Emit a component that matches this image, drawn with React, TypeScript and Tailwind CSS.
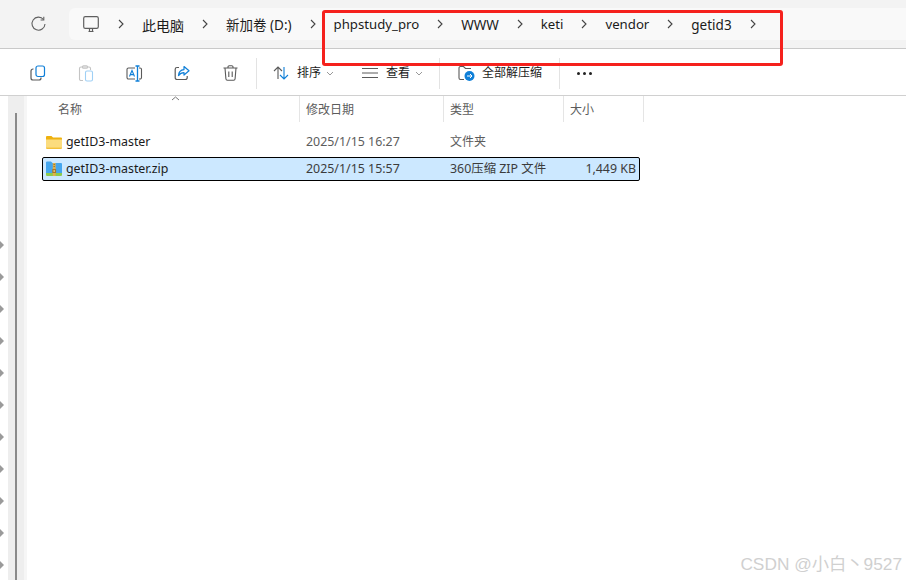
import React from 'react'

const font = '[font-family:"Noto_Sans","Noto_Sans_CJK_SC",sans-serif]'

function Chevron() {
  return (
    <svg width="6" height="10" viewBox="0 0 6 10" fill="none" stroke="#444" strokeWidth="1.1" className="shrink-0">
      <path d="M1 1l4 4-4 4" />
    </svg>
  )
}

function SmallCaret() {
  return (
    <svg width="8" height="5" viewBox="0 0 8 5" fill="none" stroke="#999" strokeWidth="1">
      <path d="M1 1l3 3 3-3" />
    </svg>
  )
}

function Crumbs() {
  const items = [
    { t: '此电脑', c: 'text-[14px]' },
    { t: '新加卷 (D:)', c: 'text-[13.5px]' },
    { t: 'phpstudy_pro', c: 'text-[13.2px]' },
    { t: 'WWW', c: 'text-[13.5px]' },
    { t: 'keti', c: 'text-[13.2px]' },
    { t: 'vendor', c: 'text-[13.2px]' },
    { t: 'getid3', c: 'text-[13.5px]' },
  ]
  return (
    <div className="ml-[23px] flex h-8 flex-1 items-center rounded-l-md bg-[#f9f9f9] pl-[14px]">
      <svg width="16" height="17" viewBox="0 0 16 17" fill="none" stroke="#5f5f5f" strokeWidth="1.2">
        <rect x="0.7" y="0.7" width="14.6" height="11.6" rx="1.6" />
        <path d="M5.5 15.5h5M6.5 12.5v3M9.5 12.5v3" />
      </svg>
      <div className="ml-[19px] flex items-center gap-[18px] text-[#1b1b1b]">
        <Chevron />
        {items.map((item) => (
          <React.Fragment key={item.t}>
            <span className={`whitespace-nowrap pt-[2px] ${item.c}`}>{item.t}</span>
            <Chevron />
          </React.Fragment>
        ))}
      </div>
    </div>
  )
}

function CopyIcon() {
  return (
    <svg width="16" height="16" viewBox="0 0 16 16" fill="none" strokeWidth="1.2">
      <path d="M3.5 4H3a2 2 0 0 0-2 2v7a2 2 0 0 0 2 2h6a2 2 0 0 0 2-2v-.5" stroke="#5a5a5a" />
      <rect x="6" y="1" width="8.5" height="10.5" rx="2" stroke="#0f7fd8" />
    </svg>
  )
}

function PasteIcon() {
  return (
    <svg width="16" height="17" viewBox="0 0 16 17" fill="none" strokeWidth="1.1">
      <path d="M5 15.5H3a1.5 1.5 0 0 1-1.5-1.5V3.5A1.5 1.5 0 0 1 3 2h8a1.5 1.5 0 0 1 1.5 1.5V5" stroke="#c4c4c4" />
      <rect x="4.5" y="0.8" width="5" height="2.4" rx="1" stroke="#c4c4c4" />
      <rect x="7.5" y="6" width="7" height="10" rx="1.5" stroke="#9fd0f5" />
    </svg>
  )
}

function RenameIcon() {
  return (
    <svg width="17" height="17" viewBox="0 0 17 17" fill="none" strokeWidth="1.1">
      <path d="M9 3H2.5A1.5 1.5 0 0 0 1 4.5v8A1.5 1.5 0 0 0 2.5 14H9M13 3h1a1.5 1.5 0 0 1 1.5 1.5v8A1.5 1.5 0 0 1 14 14h-1" stroke="#5a5a5a" />
      <path d="M3.5 11.5L6 5.5l2.5 6M4.4 9.6h3.2" stroke="#0f7fd8" />
      <path d="M9.5 1h4M9.5 16h4M11.5 1v15" stroke="#0f7fd8" strokeWidth="1.3" />
    </svg>
  )
}

function ShareIcon() {
  return (
    <svg width="16" height="16" viewBox="0 0 16 16" fill="none" strokeWidth="1.2">
      <path d="M5 2.5H3A1.8 1.8 0 0 0 1.2 4.3v8.4A1.8 1.8 0 0 0 3 14.5h8.4a1.8 1.8 0 0 0 1.8-1.8V11" stroke="#5a5a5a" />
      <path d="M10 1.5l5 4.3-5 4.2V7.6c-2.5 0-4 .8-5.5 3 .2-3.5 2-5.7 5.5-6z" stroke="#0f7fd8" strokeLinejoin="round" />
    </svg>
  )
}

function TrashIcon() {
  return (
    <svg width="15" height="16" viewBox="0 0 15 16" fill="none" stroke="#5a5a5a" strokeWidth="1.1">
      <path d="M0.5 3h14M5 3V2a1.2 1.2 0 0 1 1.2-1.2h2.6A1.2 1.2 0 0 1 10 2v1" />
      <path d="M2 3l.9 10.8a1.5 1.5 0 0 0 1.5 1.4h6.2a1.5 1.5 0 0 0 1.5-1.4L13 3" />
      <path d="M5.8 6.5v5.5M9.2 6.5v5.5" />
    </svg>
  )
}

function SortIcon() {
  return (
    <svg width="16" height="14" viewBox="0 0 16 14" fill="none" strokeWidth="1.1">
      <path d="M5 13V1M1 5l4-4 4 4" stroke="#5a5a5a" />
      <path d="M11 1v12M7 9l4 4 4-4" stroke="#0f7fd8" />
    </svg>
  )
}

function ViewIcon() {
  return (
    <svg width="16" height="12" viewBox="0 0 16 12" fill="none" stroke="#5a5a5a" strokeWidth="1">
      <path d="M0 1.5h16M0 6h16M0 10.5h16" />
    </svg>
  )
}

function ExtractIcon() {
  return (
    <svg width="17" height="16" viewBox="0 0 17 16" fill="none">
      <path d="M6 14.5H2.5A1.5 1.5 0 0 1 1 13V3a1.5 1.5 0 0 1 1.5-1.5h3l2 2H13" stroke="#5a5a5a" strokeWidth="1.1" />
      <circle cx="11.5" cy="11" r="5" fill="#0f7fd8" />
      <path d="M9 11h5M12 9l2 2-2 2" stroke="#fff" strokeWidth="1" />
    </svg>
  )
}

function FolderIcon() {
  return (
    <svg width="16" height="14" viewBox="0 0 16 14">
      <path d="M0 2a1 1 0 0 1 1-1h4.5l1.5 1.5h8a1 1 0 0 1 1 1V5H0z" fill="#eeb10f" />
      <path d="M0 4.5h16v8a1 1 0 0 1-1 1H1a1 1 0 0 1-1-1z" fill="#fbdc7e" />
      <path d="M0 12.8h16v.2a1 1 0 0 1-1 .8H1a1 1 0 0 1-1-.8z" fill="#eeb10f" />
    </svg>
  )
}

function ZipIcon() {
  return (
    <svg width="16" height="15" viewBox="0 0 16 15">
      <path d="M0 1.5a1 1 0 0 1 1-1h4L6.5 2H15a1 1 0 0 1 1 1v9H0z" fill="#45a6ee" />
      <path d="M0 12h16v2a1 1 0 0 1-1 1H1a1 1 0 0 1-1-1z" fill="#8ccb4f" />
      <rect x="6.8" y="2" width="2.8" height="13" fill="#e2b04a" />
      <rect x="6.3" y="8" width="3.8" height="4" fill="#a9772a" />
      <rect x="7.5" y="9.2" width="1.4" height="1.6" fill="#f3d68e" />
      <path d="M7.5 3.5h1.4M7.5 5.5h1.4" stroke="#8a6420" strokeWidth="0.8" />
    </svg>
  )
}

const columns = [
  { label: '修改日期', w: 'w-[144px]' },
  { label: '类型', w: 'w-[120px]' },
  { label: '大小', w: 'w-[80px]' },
]

export default function App() {
  return (
    <div className={`relative flex h-[580px] w-[906px] flex-col overflow-hidden bg-white ${font}`}>
      {/* 주소 표시줄 */}
      <div className="flex h-[49px] items-center border-b border-[#c9c9c9] bg-[#f3f3f3] pl-[30px]">
        <svg width="16" height="16" viewBox="0 0 16 16" fill="none" stroke="#5f5f5f" strokeWidth="1.1" className="shrink-0">
          <path d="M13.5 3.5A6.5 6.5 0 1 0 15 8" />
          <path d="M13.8 0.8V4h-3.2" />
        </svg>
        <Crumbs />
      </div>

      {/* 툴바 */}
      <div className="flex h-[47px] items-center border-b border-[#d0d0d0] pl-[14px] pt-[2px] text-[12px] text-[#1b1b1b]">
        {[<CopyIcon key="c" />, <PasteIcon key="p" />, <RenameIcon key="r" />, <ShareIcon key="s" />, <TrashIcon key="t" />].map((icon, i) => (
          <div key={i} className="flex w-[48px] items-center justify-center">
            {icon}
          </div>
        ))}
        <div className="ml-[2px] h-[31px] w-px bg-[#e3e3e3]" />
        <div className="ml-[16px] flex items-center">
          <SortIcon />
          <span className="ml-[8px]">排序</span>
          <span className="ml-[5px]"><SmallCaret /></span>
        </div>
        <div className="ml-[28px] flex items-center">
          <ViewIcon />
          <span className="ml-[8px]">查看</span>
          <span className="ml-[5px]"><SmallCaret /></span>
        </div>
        <div className="ml-[16px] h-[31px] w-px bg-[#e3e3e3]" />
        <div className="ml-[18px] flex items-center">
          <ExtractIcon />
          <span className="ml-[7px]">全部解压缩</span>
        </div>
        <div className="ml-[17px] h-[31px] w-px bg-[#e3e3e3]" />
        <div className="ml-[17px] flex gap-[3px]">
          <span className="size-[3px] rounded-full bg-[#222]" />
          <span className="size-[3px] rounded-full bg-[#222]" />
          <span className="size-[3px] rounded-full bg-[#222]" />
        </div>
      </div>

      {/* 본문 */}
      <div className="flex flex-1">
        <div className="flex w-2 flex-col gap-[24px] pt-[145px]">
          {Array.from({ length: 11 }).map((_, i) => (
            <span key={i} className="h-2 w-[4px] bg-[#9a9a9a] [clip-path:polygon(0_0,100%_50%,0_100%)]" />
          ))}
        </div>
        <div className="flex w-4 justify-center bg-[#eeeeee] pt-[17px]">
          <div className="h-full w-[2px] bg-[#8a8a8a]" />
        </div>
        <div className="w-[3px] bg-[#f6f6f6]" />

        <div className="relative flex-1">
          <div className="flex h-[26px] text-[12px] text-[#5c5c5c]">
            <div className="relative w-[273px] border-r border-[#e5e5e5] pl-[31px] pt-[5px]">
              名称
              <svg width="9" height="5" viewBox="0 0 9 5" fill="none" stroke="#777" strokeWidth="1" className="absolute left-[144px] top-0">
                <path d="M1 4l3.5-3 3.5 3" />
              </svg>
            </div>
            {columns.map((c) => (
              <div key={c.label} className={`${c.w} border-r border-[#e5e5e5] pl-[6px] pt-[5px]`}>
                {c.label}
              </div>
            ))}
          </div>

          <div className="mt-[9px] flex h-[22px] items-center text-[12.4px]">
            <div className="flex w-[273px] items-center pl-[19px] text-[#1b1b1b]">
              <FolderIcon />
              <span className="ml-[4px]">getID3-master</span>
            </div>
            <div className="w-[144px] pl-[6px] text-[#5c5c5c]">2025/1/15 16:27</div>
            <div className="w-[120px] pl-[6px] text-[12px] text-[#5c5c5c]">文件夹</div>
          </div>

          <div className="ml-[15px] mt-[4px] flex h-[24px] w-[598px] items-center rounded-[2px] border border-black bg-[#cce8ff] text-[12.4px]">
            <div className="flex w-[257px] items-center pl-[3px] text-[#1b1b1b]">
              <ZipIcon />
              <span className="ml-[4px]">getID3-master.zip</span>
            </div>
            <div className="w-[144px] pl-[6px] text-[#3c3c3c]">2025/1/15 15:57</div>
            <div className="w-[120px] pl-[6px] text-[#3c3c3c]">360压缩 ZIP 文件</div>
            <div className="w-[72px] text-right text-[#3c3c3c]">1,449 KB</div>
          </div>
        </div>
      </div>

      {/* 빨간 표시 */}
      <div className="absolute left-[322px] top-[10px] h-[56px] w-[461px] rounded-[3px] border-[3px] border-[#f5211d]" />

      {/* 워터마크 */}
      <div className="absolute bottom-[2px] right-[4px] [font-family:'Liberation_Sans','Noto_Sans_CJK_SC',sans-serif] text-[17.3px] text-[#d0d0d0]">CSDN @小白丶9527</div>
    </div>
  )
}
